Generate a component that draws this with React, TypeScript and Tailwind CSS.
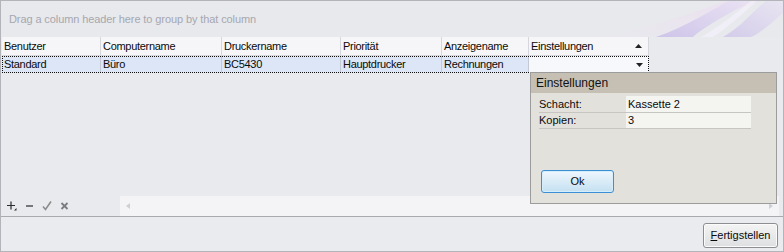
import React from "react";

const cols = [
  { name: "Benutzer", w: "w-[99px]", val: "Standard" },
  { name: "Computername", w: "w-[121px]", val: "Büro" },
  { name: "Druckername", w: "w-[119px]", val: "BC5430" },
  { name: "Priorität", w: "w-[101px]", val: "Hauptdrucker" },
  { name: "Anzeigename", w: "w-[87px]", val: "Rechnungen" },
];

function Swirl() {
  return (
    <svg className="absolute right-0 top-0" width="182" height="36" viewBox="0 0 182 36">
      <defs>
        <linearGradient id="g1" x1="0" y1="1" x2="1" y2="0">
          <stop offset="0" stopColor="#c6b8e8" />
          <stop offset="1" stopColor="#e8e2f4" />
        </linearGradient>
        <linearGradient id="g2" x1="0" y1="1" x2="1" y2="0">
          <stop offset="0" stopColor="#e9e9ee" />
          <stop offset="1" stopColor="#ecdff0" />
        </linearGradient>
      </defs>
      <path d="M0 36 C40 30 85 14 125 0 L160 0 C120 14 80 30 45 36 Z" fill="url(#g2)" opacity="0.85" />
      <path d="M55 36 C85 26 108 10 128 0 L150 0 C125 14 100 28 92 36 Z" fill="url(#g1)" opacity="0.75" />
      <path d="M122 36 C140 26 150 12 165 0 L182 0 L182 12 C170 22 160 32 150 36 Z" fill="url(#g1)" opacity="0.6" />
      <path d="M100 36 C118 26 135 12 150 0 L156 0 C140 14 125 28 112 36 Z" fill="#f3eff9" opacity="0.7" />
    </svg>
  );
}

export default function App() {
  return (
    <div className="relative w-[784px] h-[252px] bg-[#eaebef] border border-[#b2b4ba] font-['Liberation_Sans',Arial,sans-serif] text-[11px] text-[#0a0a0a] flex flex-col overflow-hidden">
      {/* grid */}
      <div className="h-[216px] border-b border-[#a9aab0] flex flex-col bg-[#e9eaee]">
        {/* group panel */}
        <div className="relative h-[36px] bg-[#e8e9ed] flex items-center pl-[8px] overflow-hidden">
          <Swirl />
          <span className="relative text-[#a6a7af] tracking-[-0.1px]">Drag a column header here to group by that column</span>
        </div>
        {/* header */}
        <div className="ml-[1px] flex h-[19px] tracking-[-0.3px]">
          {cols.map((c) => (
            <div key={c.name} className={`${c.w} h-full bg-[#f6f6f8] border-r border-[#d6d7dd] border-b border-b-[#d6d7dd] flex items-center pl-[2px]`}>
              {c.name}
            </div>
          ))}
          <div className="w-[120px] h-full bg-[#f6f6f8] border-r border-[#d6d7dd] border-b border-b-[#d6d7dd] flex items-center pl-[2px] pr-[6px] justify-between">
            <span>Einstellungen</span>
            <svg width="7" height="4" viewBox="0 0 7 4"><path d="M3.5 0 L7 4 L0 4 Z" fill="#222" /></svg>
          </div>
        </div>
        {/* row */}
        <div className="ml-[1px] relative flex h-[17px] w-[647px] tracking-[-0.3px]">
          {cols.map((c) => (
            <div key={c.name} className={`${c.w} h-full bg-[#dce6f7] border-r border-[#c3c8d2] flex items-center pl-[2px]`}>
              {c.val}
            </div>
          ))}
          <div className="w-[120px] h-full bg-[#f7f8fb] flex items-center justify-end pr-[6px]">
            <svg width="7" height="4" viewBox="0 0 7 4"><path d="M0 0 L7 0 L3.5 4 Z" fill="#222" /></svg>
          </div>
          <div className="pointer-events-none absolute inset-0 border border-dotted border-[#111]" />
        </div>
        <div className="flex-1" />
        {/* footer toolbar */}
        <div className="h-[20px] flex items-center">
          <div className="w-[119px] h-full flex items-center pl-[6px] gap-[8px]">
            <svg width="10" height="10" viewBox="0 0 10 10">
              <path d="M4 0.5 V8.5 M0 4.5 H8" stroke="#2a2a2a" strokeWidth="1.2" />
              <path d="M7 9.5 L9.5 9.5 L9.5 7 Z" fill="#2a2a2a" />
            </svg>
            <svg width="9" height="10" viewBox="0 0 9 10"><path d="M1 5 H8" stroke="#2a2a2a" strokeWidth="1.2" /></svg>
            <svg width="10" height="10" viewBox="0 0 10 10"><path d="M1 5.5 L3.5 8.5 L9 0.5" stroke="#8c8c8c" strokeWidth="1.6" fill="none" /></svg>
            <svg width="9" height="10" viewBox="0 0 9 10"><path d="M1.5 2 L7.5 8 M7.5 2 L1.5 8" stroke="#7c7c80" strokeWidth="1.8" /></svg>
          </div>
          <div className="flex-1 mr-[4px] h-full bg-[#f4f4f6] flex items-center justify-between px-[6px]">
            <svg width="4" height="6" viewBox="0 0 4 6"><path d="M4 0 L0 3 L4 6 Z" fill="#cfd0d6" /></svg>
            <svg width="4" height="6" viewBox="0 0 4 6"><path d="M0 0 L4 3 L0 6 Z" fill="#cfd0d6" /></svg>
          </div>
        </div>
      </div>
      {/* bottom panel */}
      <div className="flex-1 flex justify-end items-start pt-[6px] pr-[5px]">
        <button className="w-[75px] h-[25px] rounded-[3px] border border-[#8c8e92] bg-gradient-to-b from-[#f4f4f4] to-[#dedfe1] shadow-[inset_0_0_0_1px_#fbfbfb] text-[11px] text-[#0a0a0a] flex items-center justify-center">
          <span><span className="underline">F</span>ertigstellen</span>
        </button>
      </div>

      {/* popup */}
      <div className="absolute left-[529px] top-[71px] w-[247px] h-[132px] border border-[#9c9c9c] bg-[#e3e1dc] flex flex-col">
        <div className="h-[20px] bg-[#c6bfb4] flex items-center pl-[5px] text-[12px] text-[#111]">Einstellungen</div>
        <div className="mt-[3px] ml-[8px] w-[212px] flex flex-col">
          <div className="flex h-[17px] border-b border-[#c6c5c2]">
            <div className="w-[87px] flex items-center">Schacht:</div>
            <div className="flex-1 bg-[#f4f4f0] flex items-center pl-[2px]">Kassette 2</div>
          </div>
          <div className="flex h-[16px] border-b border-[#c6c5c2]">
            <div className="w-[87px] flex items-center">Kopien:</div>
            <div className="flex-1 bg-[#f4f4f0] flex items-center pl-[2px]">3</div>
          </div>
        </div>
        <div className="mt-[41px] ml-[10px]">
          <button className="w-[73px] h-[23px] rounded-[3px] border border-[#3c8fd2] bg-gradient-to-b from-[#eef7fd] to-[#c4e0f1] shadow-[inset_0_0_0_1px_#d6eefb] text-[11px] text-[#0a0a0a] flex items-center justify-center">
            Ok
          </button>
        </div>
      </div>
    </div>
  );
}
